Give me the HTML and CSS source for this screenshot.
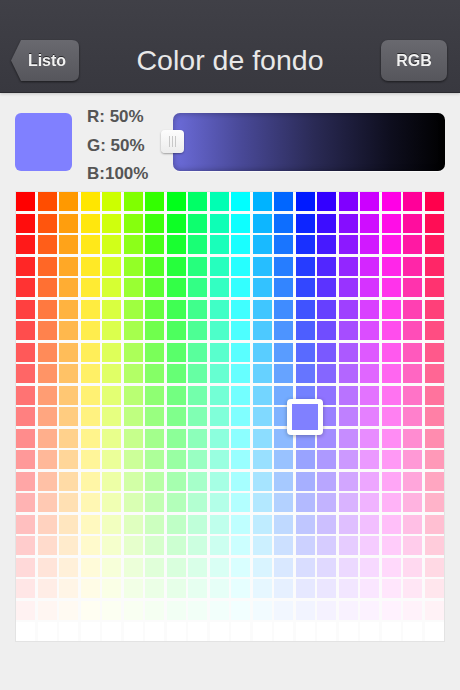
FILE: index.html
```html
<!DOCTYPE html>
<html lang="es">
<head>
<meta charset="utf-8">
<title>Color de fondo</title>
<link rel="stylesheet" href="styles.css">
</head>
<body>
<header class="navbar">
  <div class="back-wrap"><button class="btn back">Listo</button></div>
  <h1 class="title">Color de fondo</h1>
  <div class="btn-wrap"><button class="btn">RGB</button></div>
</header>
<main class="content">
  <section class="picker">
    <div class="swatch"></div>
    <div class="values">
      <div>R: 50%</div>
      <div>G: 50%</div>
      <div>B:100%</div>
    </div>
    <div class="track">
      <div class="thumb"><span></span><span></span><span></span></div>
    </div>
  </section>
  <div class="grid" id="grid">
    <div class="selected"></div>
  </div>
</main>
<script src="script.js"></script>
</body>
</html>
```

FILE: styles.css
```css
* { box-sizing: border-box; }
html, body { margin: 0; padding: 0; }
body {
  width: 460px;
  height: 690px;
  overflow: hidden;
  background: #efefef;
  font-family: "Liberation Sans", Arial, sans-serif;
}
.navbar {
  height: 92px;
  display: flex;
  align-items: center;
  justify-content: space-between;
  padding: 40px 13px 11px 11px;
  background: linear-gradient(#404047, #38383f);
  box-shadow: 0 1px 0 #2a2a2f, 0 2px 3px rgba(0,0,0,.18);
  position: relative;
  z-index: 1;
}
.title {
  margin: 0;
  font-size: 28.5px;
  font-weight: normal;
  color: #e8e8e8;
  line-height: 41px;
}
.back-wrap, .btn-wrap {
  filter: drop-shadow(0 1px 1px rgba(0,0,0,.55));
}
.btn {
  display: block;
  height: 41px;
  border: 0;
  margin: 0;
  font-family: "Liberation Sans", Arial, sans-serif;
  font-weight: bold;
  font-size: 16px;
  color: #f2f2f2;
  text-shadow: 0 -1px 0 rgba(0,0,0,.6);
  background: linear-gradient(#69696f, #56565c);
  border-radius: 7px;
  width: 66px;
  padding: 0;
}
.back {
  width: 68px;
  padding: 0 0 0 4px;
  border-radius: 0;
  clip-path: path('M10 0 H61 Q68 0 68 7 V34 Q68 41 61 41 H10 L0 20.5 Z');
}
.content {
  padding: 21px 15px 0 15px;
}
.picker {
  display: flex;
  height: 58px;
}
.swatch {
  width: 57px;
  height: 58px;
  border-radius: 6px;
  background: #8080ff;
}
.values {
  width: 101px;
  height: 58px;
  margin-top: -10px;
  padding-left: 15px;
  font-size: 17px;
  font-weight: bold;
  line-height: 28.5px;
  color: #555;
}
.values div { white-space: nowrap; }
.track {
  flex: 1;
  height: 58px;
  border-radius: 7px;
  position: relative;
  background: linear-gradient(to right, #6c6cda 0%, #4a4a9a 24%, #2a2a55 52%, #0e0e1e 80%, #000 100%);
  box-shadow: inset 0 0 6px rgba(0,0,0,.35), 0 1px 0 rgba(255,255,255,.6);
}
.thumb {
  position: absolute;
  left: -12px;
  top: 17px;
  width: 23px;
  height: 23px;
  border-radius: 4px;
  background: linear-gradient(#fdfdfd, #ececec);
  box-shadow: 0 1px 2px rgba(0,0,0,.35);
  display: flex;
  justify-content: center;
  align-items: center;
  gap: 2.3px;
}
.thumb span {
  width: 1px;
  height: 11px;
  background: #c8c8c8;
}
.grid {
  margin-top: 20px;
  width: 430px;
  border: 1px solid #e3e3e3;
  background: #fbfbfb;
  display: grid;
  grid-template-columns: repeat(20, 1fr);
  grid-auto-rows: 19px;
  gap: 2.5px;
  position: relative;
}
.cell { width: 100%; height: 19px; }
.selected {
  position: absolute;
  left: 271px;
  top: 206.5px;
  width: 36px;
  height: 36px;
  border: 5px solid #fff;
  border-radius: 4px;
  background: #8080ff;
  box-shadow: 0 1px 4px rgba(0,0,0,.3);
  z-index: 2;
}
```

FILE: script.js
```js
(function () {
  var grid = document.getElementById('grid');
  function hsv(h, s, v) {
    var c = v * s, hp = h / 60, x = c * (1 - Math.abs(hp % 2 - 1));
    var r = 0, g = 0, b = 0;
    if (hp < 1) { r = c; g = x; }
    else if (hp < 2) { r = x; g = c; }
    else if (hp < 3) { g = c; b = x; }
    else if (hp < 4) { g = x; b = c; }
    else if (hp < 5) { r = x; b = c; }
    else { r = c; b = x; }
    var m = v - c;
    return 'rgb(' + Math.round((r + m) * 255) + ',' + Math.round((g + m) * 255) + ',' + Math.round((b + m) * 255) + ')';
  }
  var frag = document.createDocumentFragment();
  for (var row = 0; row < 21; row++) {
    for (var col = 0; col < 20; col++) {
      var d = document.createElement('div');
      d.className = 'cell';
      d.style.background = hsv(col * 18, 1 - row / 20, 1);
      frag.appendChild(d);
    }
  }
  grid.appendChild(frag);
})();
```
